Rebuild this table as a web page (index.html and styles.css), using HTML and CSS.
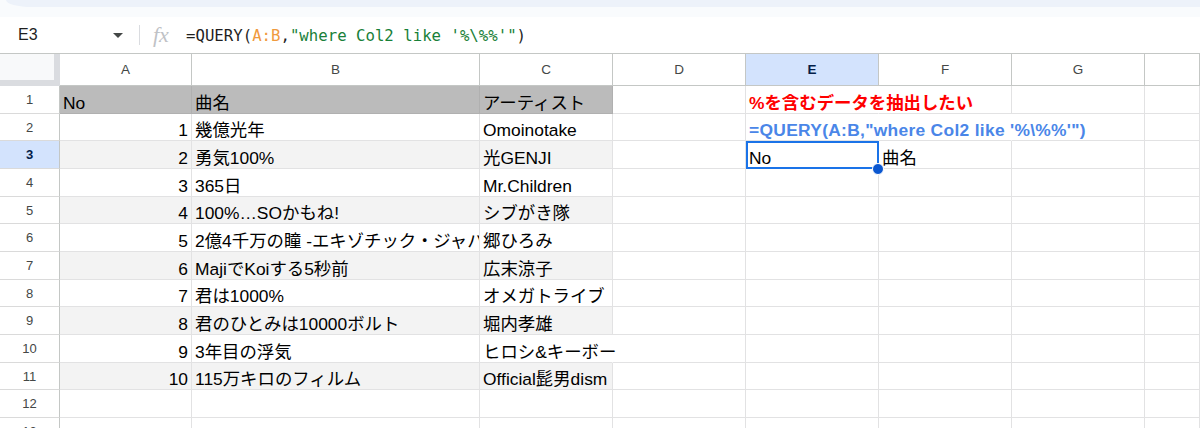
FILE: index.html
```html
<!DOCTYPE html>
<html lang="ja">
<head>
<meta charset="utf-8">
<title>Sheet</title>
<link rel="stylesheet" href="styles.css">
</head>
<body>
<div class="topstrip"><div class="toolbar"></div></div>
<div class="fbar">
  <div class="namebox">E3</div>
  <div class="caret"></div>
  <div class="sep"></div>
  <div class="fx">fx</div>
  <div class="formula">=QUERY(<span class="ref">A:B</span>,<span class="str">"where Col2 like '%\%%'"</span>)</div>
</div>
<div class="sheet">
  <div class="corner"></div>
  <div class="ch">A</div><div class="ch">B</div><div class="ch">C</div><div class="ch">D</div><div class="ch sel">E</div><div class="ch">F</div><div class="ch">G</div><div class="ch"></div>

  <div class="rh">1</div>
  <div class="c hd">No</div><div class="c hd">曲名</div><div class="c hd">アーティスト</div><div class="c"></div><div class="c spill red">%を含むデータを抽出したい</div><div class="c"></div><div class="c"></div><div class="c"></div>

  <div class="rh">2</div>
  <div class="c num">1</div><div class="c">幾億光年</div><div class="c">Omoinotake</div><div class="c"></div><div class="c spill blue">=QUERY(A:B,"where Col2 like '%\%%'")</div><div class="c spill"></div><div class="c"></div><div class="c"></div>

  <div class="rh selr">3</div>
  <div class="c num band">2</div><div class="c band">勇気100%</div><div class="c band">光GENJI</div><div class="c"></div><div class="c active">No<div class="selbox"></div><div class="handle"></div></div><div class="c">曲名</div><div class="c"></div><div class="c"></div>

  <div class="rh">4</div>
  <div class="c num">3</div><div class="c">365日</div><div class="c">Mr.Children</div><div class="c"></div><div class="c"></div><div class="c"></div><div class="c"></div><div class="c"></div>

  <div class="rh">5</div>
  <div class="c num band">4</div><div class="c band">100%…SOかもね!</div><div class="c band">シブがき隊</div><div class="c"></div><div class="c"></div><div class="c"></div><div class="c"></div><div class="c"></div>

  <div class="rh">6</div>
  <div class="c num">5</div><div class="c clip">2億4千万の瞳 -エキゾチック・ジャパン-</div><div class="c">郷ひろみ</div><div class="c"></div><div class="c"></div><div class="c"></div><div class="c"></div><div class="c"></div>

  <div class="rh">7</div>
  <div class="c num band">6</div><div class="c band">MajiでKoiする5秒前</div><div class="c band">広末涼子</div><div class="c"></div><div class="c"></div><div class="c"></div><div class="c"></div><div class="c"></div>

  <div class="rh">8</div>
  <div class="c num">7</div><div class="c">君は1000%</div><div class="c">オメガトライブ</div><div class="c"></div><div class="c"></div><div class="c"></div><div class="c"></div><div class="c"></div>

  <div class="rh">9</div>
  <div class="c num band">8</div><div class="c band">君のひとみは10000ボルト</div><div class="c band">堀内孝雄</div><div class="c"></div><div class="c"></div><div class="c"></div><div class="c"></div><div class="c"></div>

  <div class="rh">10</div>
  <div class="c num">9</div><div class="c">3年目の浮気</div><div class="c spill">ヒロシ&amp;キーボー</div><div class="c"></div><div class="c"></div><div class="c"></div><div class="c"></div><div class="c"></div>

  <div class="rh">11</div>
  <div class="c num band">10</div><div class="c band">115万キロのフィルム</div><div class="c band">Official髭男dism</div><div class="c"></div><div class="c"></div><div class="c"></div><div class="c"></div><div class="c"></div>

  <div class="rh">12</div>
  <div class="c"></div><div class="c"></div><div class="c"></div><div class="c"></div><div class="c"></div><div class="c"></div><div class="c"></div><div class="c"></div>

  <div class="rh">13</div>
  <div class="c"></div><div class="c"></div><div class="c"></div><div class="c"></div><div class="c"></div><div class="c"></div><div class="c"></div><div class="c"></div>
</div>
</body>
</html>
```

FILE: styles.css
```css
* { box-sizing: border-box; }
html, body { margin: 0; padding: 0; background: #ffffff; overflow: hidden; }
body {
  width: 1200px;
  height: 428px;
  font-family: "Liberation Sans", Arial, "Noto Sans CJK JP", sans-serif;
  color: #000000;
}

.topstrip { height: 17px; background: #f9fbfd; }
.toolbar {
  height: 7px;
  margin-left: 6px;
  background: #edf2fa;
  border-bottom-left-radius: 26px 7px;
}

.fbar {
  height: 37px;
  display: flex;
  align-items: center;
  padding-left: 18px;
  border-bottom: 1px solid #c4c7c5;
}
.namebox { width: 95px; font-size: 16px; color: #1f1f1f; }
.caret {
  width: 0; height: 0;
  border-left: 5px solid transparent;
  border-right: 5px solid transparent;
  border-top: 5px solid #444746;
  margin-right: 16px;
}
.sep { width: 1px; height: 20px; background: #dadce0; margin-right: 13px; }
.fx {
  width: 20px;
  margin-right: 13px;
  font-family: "Liberation Serif", "Times New Roman", serif;
  font-style: italic;
  font-size: 22px;
  line-height: 22px;
  color: #bfc2c6;
}
.formula {
  font-family: "DejaVu Sans Mono", monospace;
  font-size: 15.7px;
  color: #1f1f1f;
  white-space: pre;
}
.ref { color: #f09a3e; }
.str { color: #188038; }

.sheet {
  display: grid;
  grid-template-columns: 60px 132px 288px 133px 133px 133px 133px 133px 1fr;
  grid-template-rows: 32px 28px 27px 28px 28px 27px 28px 28px 27px 28px 28px 27px 28px 28px;
}

.corner {
  background: #f8f9fa;
  border-right: 6px solid #dadce0;
  border-bottom: 6px solid #dadce0;
}

.ch {
  display: flex;
  align-items: center;
  justify-content: center;
  font-size: 13.5px;
  color: #444746;
  border-right: 1px solid #c4c7c5;
  border-bottom: 1px solid #c4c7c5;
}
.ch.sel { background: #d3e3fd; color: #041e49; font-weight: bold; }

.rh {
  display: flex;
  align-items: center;
  justify-content: center;
  font-size: 13px;
  color: #444746;
  border-right: 1px solid #c4c7c5;
  border-bottom: 1px solid #dadada;
}
.rh.selr { background: #d3e3fd; color: #041e49; font-weight: bold; }

.c {
  display: flex;
  align-items: flex-end;
  padding: 0 3px 0 3px;
  font-size: 17.4px;
  line-height: 20px;
  white-space: nowrap;
  min-width: 0;
  border-right: 1px solid #e2e2e3;
  border-bottom: 1px solid #e2e2e3;
}
.c.num { justify-content: flex-end; }
.c.hd { background: #bbbbbb; border-color: #b0b0b0; }
.c.band { background: #f3f3f3; }
.c.clip { overflow: hidden; }
.c.spill { border-right-color: transparent; }
.c.red { color: #ff0000; font-weight: bold; }
.c.blue { color: #4a86e8; font-weight: bold; letter-spacing: 0.3px; }

.c.active { position: relative; }
.selbox {
  position: absolute;
  left: 0; top: 0; right: -1px; bottom: -1px;
  border: 2px solid #1a73e8;
}
.handle {
  position: absolute;
  width: 10px; height: 10px;
  right: -6px; bottom: -7px;
  border-radius: 50%;
  background: #0b57d0;
  border: 1px solid #ffffff;
  box-sizing: content-box;
}
```
